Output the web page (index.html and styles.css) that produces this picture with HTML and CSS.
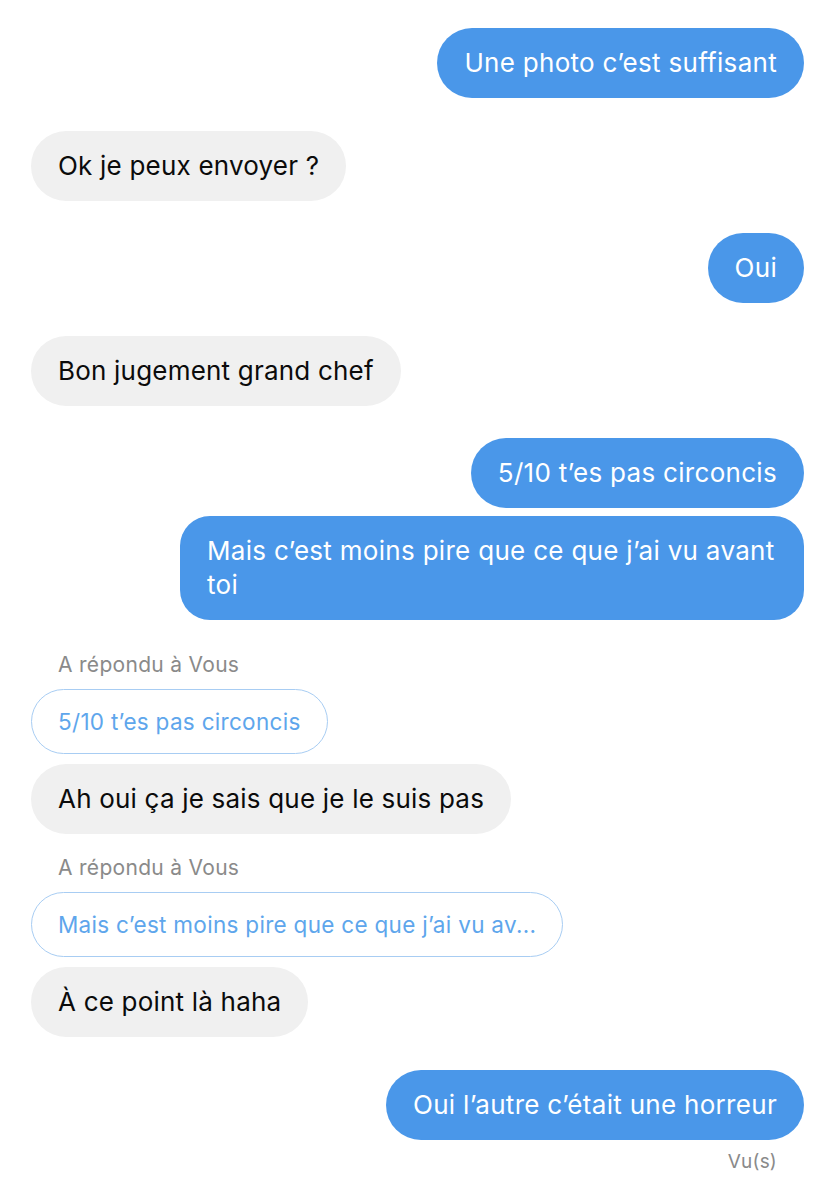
FILE: index.html
```html
<!DOCTYPE html>
<html lang="fr">
<head>
<meta charset="utf-8">
<link rel="stylesheet" href="styles.css">
</head>
<body>
<div class="chat">
  <div class="row out first"><div class="bubble blue">Une photo c’est suffisant</div></div>
  <div class="row in group"><div class="bubble gray">Ok je peux envoyer ?</div></div>
  <div class="row out group"><div class="bubble blue">Oui</div></div>
  <div class="row in group"><div class="bubble gray">Bon jugement grand chef</div></div>
  <div class="row out group"><div class="bubble blue">5/10 t’es pas circoncis</div></div>
  <div class="row out same"><div class="bubble blue wide">Mais c’est moins pire que ce que j’ai vu avant toi</div></div>
  <div class="reply-label first-label">A répondu à Vous</div>
  <div class="row in quote-row"><div class="quote">5/10 t’es pas circoncis</div></div>
  <div class="row in after-quote"><div class="bubble gray">Ah oui ça je sais que je le suis pas</div></div>
  <div class="reply-label second-label">A répondu à Vous</div>
  <div class="row in quote-row"><div class="quote">Mais c’est moins pire que ce que j’ai vu av...</div></div>
  <div class="row in after-quote"><div class="bubble gray">À ce point là haha</div></div>
  <div class="row out group"><div class="bubble blue">Oui l’autre c’était une horreur</div></div>
  <div class="seen">Vu(s)</div>
</div>
</body>
</html>
```

FILE: styles.css
```css
html, body {
  margin: 0;
  padding: 0;
  background: #ffffff;
}

.chat {
  display: flex;
  flex-direction: column;
  padding: 28px 31px 0 31px;
  font-family: Inter, "Noto Sans", sans-serif;
}

.row {
  display: flex;
}

.row.out {
  justify-content: flex-end;
}

.row.in {
  justify-content: flex-start;
}

.group {
  margin-top: 32.6px;
}

.same {
  margin-top: 8px;
}

.bubble {
  font-size: 26px;
  line-height: 34px;
  padding: 18px 27px;
  border-radius: 35px;
  letter-spacing: 0.3px;
}

.bubble.wide {
  border-radius: 30px;
  width: 570px;
}

.blue {
  background: #4a97e9;
  color: #ffffff;
}

.gray {
  background: #f0f0f0;
  color: #0b0b0b;
  letter-spacing: 0.2px;
}

.reply-label {
  font-size: 21px;
  line-height: 24px;
  letter-spacing: 0.3px;
  color: #8a8a8a;
  padding-left: 27px;
}

.first-label {
  margin-top: 33px;
}

.second-label {
  margin-top: 22px;
}

.quote-row {
  margin-top: 12px;
}

.quote {
  font-size: 22.5px;
  line-height: 29px;
  letter-spacing: 0.3px;
  padding: 17px 26px;
  border: 1px solid #a8cdf3;
  border-radius: 33px;
  color: #5ea6ec;
}

.after-quote {
  margin-top: 10px;
}

.seen {
  align-self: flex-end;
  margin-top: 10px;
  margin-right: 27px;
  font-size: 19px;
  line-height: 24px;
  letter-spacing: 0.2px;
  color: #8a8a8a;
}
```
